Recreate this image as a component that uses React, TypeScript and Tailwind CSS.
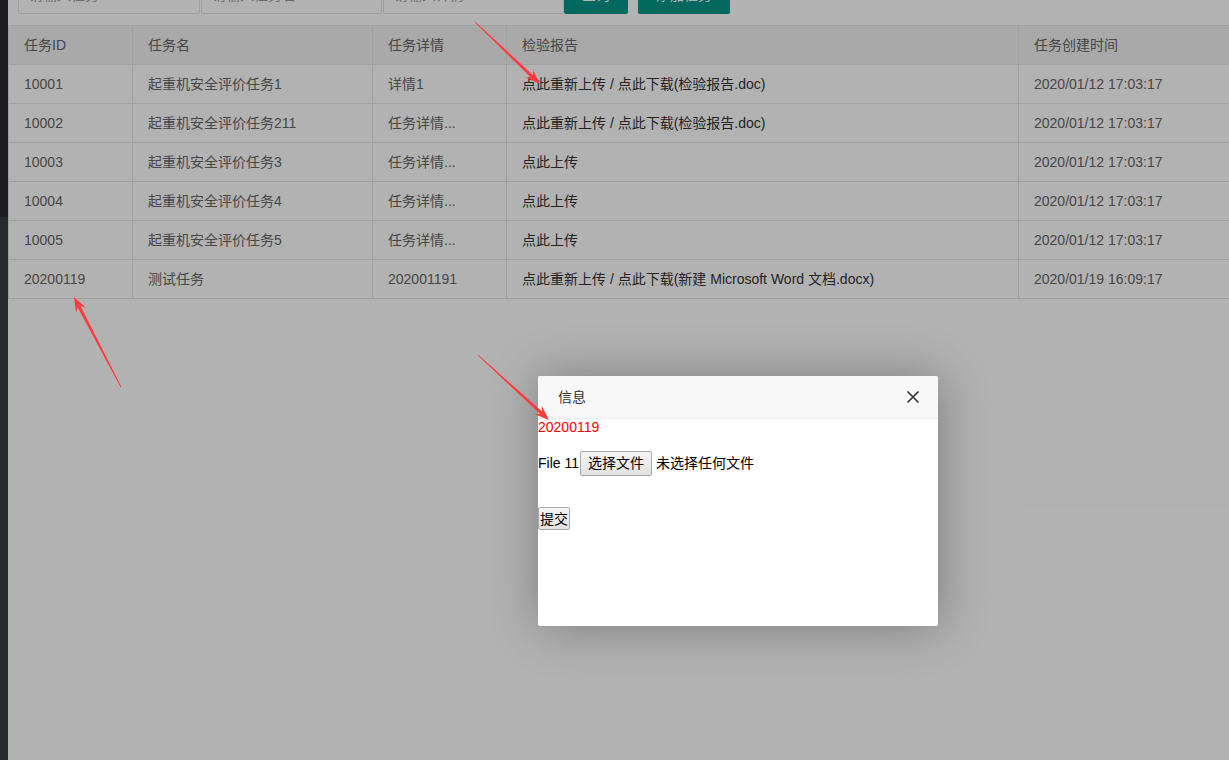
import React from "react";

type Row = { id: string; name: string; detail: string; report: string; time: string };

const rows: Row[] = [
  { id: "10001", name: "起重机安全评价任务1", detail: "详情1", report: "点此重新上传 / 点此下载(检验报告.doc)", time: "2020/01/12 17:03:17" },
  { id: "10002", name: "起重机安全评价任务211", detail: "任务详情...", report: "点此重新上传 / 点此下载(检验报告.doc)", time: "2020/01/12 17:03:17" },
  { id: "10003", name: "起重机安全评价任务3", detail: "任务详情...", report: "点此上传", time: "2020/01/12 17:03:17" },
  { id: "10004", name: "起重机安全评价任务4", detail: "任务详情...", report: "点此上传", time: "2020/01/12 17:03:17" },
  { id: "10005", name: "起重机安全评价任务5", detail: "任务详情...", report: "点此上传", time: "2020/01/12 17:03:17" },
  { id: "20200119", name: "测试任务", detail: "202001191", report: "点此重新上传 / 点此下载(新建 Microsoft Word 文档.docx)", time: "2020/01/19 16:09:17" },
];

const cols = "grid grid-cols-[124px_240px_134px_512px_1fr]";
const cell = "border-l border-[#e6e6e6] pl-[15px] flex items-center whitespace-nowrap overflow-hidden";

// red annotation arrow, thin at the tail, widening to the head
function Arrow({ x1, y1, x2, y2 }: { x1: number; y1: number; x2: number; y2: number }) {
  const len = Math.hypot(x2 - x1, y2 - y1);
  const ux = (x2 - x1) / len, uy = (y2 - y1) / len;
  const nx = -uy, ny = ux;
  const barb = { x: x2 - ux * 15, y: y2 - uy * 15 };
  const neck = { x: x2 - ux * 11, y: y2 - uy * 11 };
  const p = (x: number, y: number) => `${x.toFixed(1)},${y.toFixed(1)}`;
  const pts = [
    p(x1 + nx * 0.4, y1 + ny * 0.4),
    p(neck.x + nx * 1.6, neck.y + ny * 1.6),
    p(barb.x + nx * 5.5, barb.y + ny * 5.5),
    p(x2, y2),
    p(barb.x - nx * 5.5, barb.y - ny * 5.5),
    p(neck.x - nx * 1.6, neck.y - ny * 1.6),
    p(x1 - nx * 0.4, y1 - ny * 0.4),
  ].join(" ");
  return <polygon points={pts} fill="#ff3b3b" />;
}

export default function App() {
  return (
    <div className="relative h-[760px] w-[1229px] overflow-hidden bg-white flex font-['Liberation_Sans','Noto_Sans_CJK_SC',sans-serif] text-[14px]">
      <aside className="w-[8px] shrink-0 flex flex-col">
        <div className="h-[217px] bg-[#272a2f]" />
        <div className="flex-1 bg-[#393d49]" />
      </aside>

      <main className="flex-1 min-w-0">
        {/* search bar, scrolled mostly out of view */}
        <div className="-mt-[24px] pl-[10px] flex items-center">
          <input className="w-[182px] h-[38px] border border-[#e6e6e6] rounded-[2px] px-[10px] placeholder:text-[#999] outline-none" placeholder="请输入任务ID" />
          <input className="ml-[1px] w-[181px] h-[38px] border border-[#e6e6e6] rounded-[2px] px-[10px] placeholder:text-[#999] outline-none" placeholder="请输入任务名" />
          <input className="ml-[1px] w-[181px] h-[38px] border border-[#e6e6e6] rounded-[2px] px-[10px] placeholder:text-[#999] outline-none" placeholder="请输入详情" />
          <button className="w-[64px] h-[38px] rounded-[2px] bg-[#009688] text-white">查询</button>
          <button className="ml-[10px] w-[92px] h-[38px] rounded-[2px] bg-[#009688] text-white">添加任务</button>
        </div>

        <div className="mt-[11px] border-t border-[#e6e6e6] text-[#666]">
          <div className={`${cols} h-[39px] bg-[#f2f2f2] border-b border-[#e6e6e6]`}>
            <div className={cell}>任务ID</div>
            <div className={cell}>任务名</div>
            <div className={cell}>任务详情</div>
            <div className={cell}>检验报告</div>
            <div className={cell}>任务创建时间</div>
          </div>
          {rows.map((r) => (
            <div key={r.id} className={`${cols} h-[39px] border-b border-[#e6e6e6]`}>
              <div className={cell}>{r.id}</div>
              <div className={cell}>{r.name}</div>
              <div className={cell}>{r.detail}</div>
              <div className={`${cell} text-[#333]`}>{r.report}</div>
              <div className={cell}>{r.time}</div>
            </div>
          ))}
        </div>
      </main>

      {/* modal shade */}
      <div className="absolute inset-0 bg-black/30" />

      <div className="absolute left-[538px] top-[376px] w-[400px] h-[250px] bg-white rounded-[2px] shadow-[1px_1px_50px_rgba(0,0,0,0.3)] flex flex-col">
        <div className="h-[43px] shrink-0 bg-[#f8f8f8] border-b border-[#eee] rounded-t-[2px] flex items-center justify-between pl-[20px] pr-[18px] text-[#333]">
          <span>信息</span>
          <svg width="14" height="14" viewBox="0 0 14 14" className="text-[#333]">
            <path d="M1.5 1.5 L12.5 12.5 M12.5 1.5 L1.5 12.5" stroke="currentColor" strokeWidth="1.6" fill="none" />
          </svg>
        </div>
        <div className="text-black leading-[20px]">
          <div className="text-[#ff0000] leading-[16px]">20200119</div>
          <div className="mt-[15px] flex items-center h-[26px]">
            <span>File 11</span>
            <button className="ml-[1px] h-[25px] px-[7px] border border-[#a9a9a9] rounded-[2px] bg-gradient-to-b from-[#f6f6f6] to-[#e1e1e1] text-black text-[14px]">选择文件</button>
            <span className="ml-[4px]">未选择任何文件</span>
          </div>
          <div className="mt-[31px]">
            <button className="h-[23px] px-[1px] border border-[#a9a9a9] rounded-[2px] bg-gradient-to-b from-[#f6f6f6] to-[#e1e1e1] text-black text-[14px]">提交</button>
          </div>
        </div>
      </div>

      <svg className="absolute inset-0 pointer-events-none" width="1229" height="760">
        <Arrow x1={475} y1={22} x2={540} y2={84} />
        <Arrow x1={121} y1={387} x2={74} y2={297} />
        <Arrow x1={478} y1={355} x2={549} y2={420} />
      </svg>
    </div>
  );
}
